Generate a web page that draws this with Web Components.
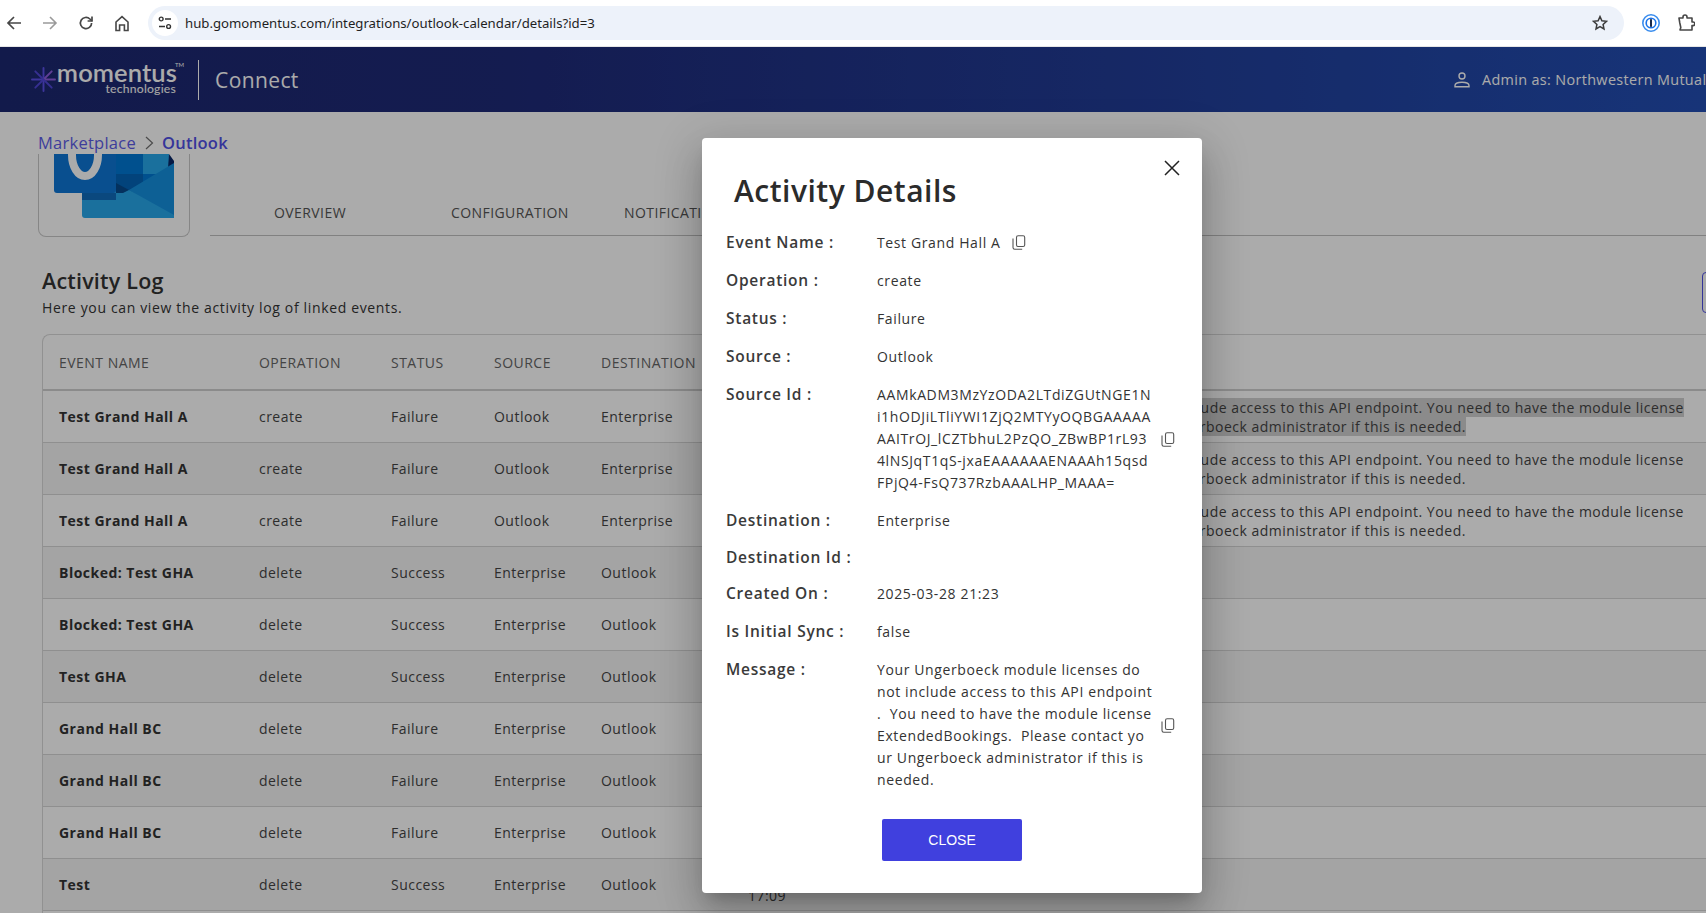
<!DOCTYPE html>
<html lang="en"><head><meta charset="utf-8"><title>Outlook</title>
<style>
html,body{margin:0;padding:0;height:100%;overflow:hidden;background:#fff;font-family:"Open Sans",sans-serif}
body{display:flex;flex-direction:column;width:1706px;height:913px}
</style></head><body>
<browser-bar></browser-bar>
<main-stage>
  <app-header></app-header>
  <bread-crumb></bread-crumb>
  <tab-strip></tab-strip>
  <log-heading></log-heading>
  <log-table>
    <log-row name="Test Grand Hall A" op="create" status="Failure" src="Outlook" dst="Enterprise" msg="sel"></log-row>
    <log-row name="Test Grand Hall A" op="create" status="Failure" src="Outlook" dst="Enterprise" msg="yes" alt></log-row>
    <log-row name="Test Grand Hall A" op="create" status="Failure" src="Outlook" dst="Enterprise" msg="yes"></log-row>
    <log-row name="Blocked: Test GHA" op="delete" status="Success" src="Enterprise" dst="Outlook" alt></log-row>
    <log-row name="Blocked: Test GHA" op="delete" status="Success" src="Enterprise" dst="Outlook"></log-row>
    <log-row name="Test GHA" op="delete" status="Success" src="Enterprise" dst="Outlook" alt></log-row>
    <log-row name="Grand Hall BC" op="delete" status="Failure" src="Enterprise" dst="Outlook"></log-row>
    <log-row name="Grand Hall BC" op="delete" status="Failure" src="Enterprise" dst="Outlook" alt></log-row>
    <log-row name="Grand Hall BC" op="delete" status="Failure" src="Enterprise" dst="Outlook"></log-row>
    <log-row name="Test" op="delete" status="Success" src="Enterprise" dst="Outlook" time="17:09" alt></log-row>
  </log-table>
  <modal-backdrop>
    <activity-modal>
      <detail-row label="Event Name :" copy="inline">Test Grand Hall A</detail-row>
      <detail-row label="Operation :">create</detail-row>
      <detail-row label="Status :">Failure</detail-row>
      <detail-row label="Source :">Outlook</detail-row>
      <detail-row label="Source Id :" copy="side">AAMkADM3MzYzODA2LTdiZGUtNGE1Ni1hODJiLTliYWI1ZjQ2MTYyOQBGAAAAAAAITrOJ_lCZTbhuL2PzQO_ZBwBP1rL934lNSJqT1qS-jxaEAAAAAAENAAAh15qsdFPjQ4-FsQ737RzbAAALHP_MAAA=</detail-row>
      <detail-row label="Destination :" gap="15">Enterprise</detail-row>
      <detail-row label="Destination Id :" gap="15"></detail-row>
      <detail-row label="Created On :">2025-03-28 21:23</detail-row>
      <detail-row label="Is Initial Sync :">false</detail-row>
      <detail-row label="Message :" copy="side" lines>Your Ungerboeck module licenses do<br>not include access to this API endpoint<br>.  You need to have the module license<br>ExtendedBookings.  Please contact yo<br>ur Ungerboeck administrator if this is<br>needed.</detail-row>
    </activity-modal>
  </modal-backdrop>
</main-stage>
<script>
function el(name, css, html, init){
  customElements.define(name, class extends HTMLElement{
    constructor(){super();const s=this.attachShadow({mode:'open'});s.innerHTML='<style>'+css+'</style>'+(typeof html==='function'?'':html);}
    connectedCallback(){ if(typeof html==='function'){const st=this.shadowRoot.querySelector('style');st.insertAdjacentHTML('afterend',html(this));} if(init)init(this);}
  });
}
const ico='fill="none" stroke="#474747" stroke-width="1.7"';
el('browser-bar',`
:host{display:flex;align-items:center;height:46px;flex:none;background:#fff;border-bottom:1px solid #e6e6e6}
.nav{width:36px;height:46px;display:flex;align-items:center;justify-content:center;flex:none}
.addr{margin-left:8px;width:1476px;height:34px;border-radius:17px;background:#edf2fa;display:flex;align-items:center;flex:none}
.tune{width:26px;height:26px;border-radius:50%;background:#fff;margin-left:4px;display:flex;align-items:center;justify-content:center;flex:none}
.url{margin-left:7px;font:13.2px/20px "Noto Sans",sans-serif;color:#1f1f1f;flex:1}
.star{margin-right:16px;display:flex}
.ext{display:flex;align-items:center;justify-content:center;flex:none}
`,`
<div class="nav" style="margin-left:-4px"><svg width="16" height="16" viewBox="0 0 16 16" ${ico}><path d="M15 8H2M8 2 2 8l6 6"/></svg></div>
<div class="nav"><svg width="16" height="16" viewBox="0 0 16 16" fill="none" stroke="#9a9a9a" stroke-width="1.6"><path d="M1 8h13M8 2l6 6-6 6"/></svg></div>
<div class="nav"><svg width="16" height="16" viewBox="0 0 16 16" ${ico}><path d="M13.6 8a5.6 5.6 0 1 1-1.7-4L14 6"/><path d="M14 1.6V6H9.6"/></svg></div>
<div class="nav"><svg width="16" height="17" viewBox="0 0 16 17" fill="none" stroke="#474747" stroke-width="1.6"><path d="M2 7 8 1.6 14 7v8.5h-3.6V10H5.6v5.5H2z"/></svg></div>
<div class="addr">
  <div class="tune"><svg width="14" height="14" viewBox="0 0 14 14" fill="none" stroke="#333" stroke-width="1.4"><circle cx="3.2" cy="3" r="1.9"/><path d="M7 3h6M1 10.5h6"/><circle cx="10.6" cy="10.5" r="1.9"/></svg></div>
  <div class="url">hub.gomomentus.com/integrations/outlook-calendar/details?id=3</div>
  <div class="star"><svg width="16" height="16" viewBox="0 0 16 16" fill="none" stroke="#3c3c3c" stroke-width="1.5"><path d="M8 1.6l1.9 4.2 4.6.5-3.4 3.1.9 4.6L8 11.7 4 14l.9-4.6-3.4-3.1 4.6-.5z"/></svg></div>
</div>
<div class="ext" style="margin-left:18px"><svg width="18" height="18" viewBox="0 0 18 18"><circle cx="9" cy="9" r="8.2" fill="#fff" stroke="#3a8dee" stroke-width="1.6"/><circle cx="9" cy="9" r="5.6" fill="#1a73e8"/><circle cx="9" cy="9" r="4" fill="#fff"/><rect x="8" y="5" width="2" height="8" rx=".8" fill="#1b2a4a"/></svg></div>
<div class="ext" style="margin-left:17px"><svg width="18" height="18" viewBox="0 0 18 18" fill="none" stroke="#474747" stroke-width="1.6"><path d="M2 4h4V3a2 2 0 0 1 4 0v1h5v4h1a1.8 1.8 0 0 1 0 3.6h-1V16H3l.8-2.5L2.8 9z" stroke-linejoin="round"/></svg></div>
`);
el('main-stage',`:host{display:block;position:relative;flex:1;min-height:0;overflow:hidden;background:#fff;color:#333}`,`<slot></slot>`);
el('app-header',`
:host{display:flex;align-items:center;height:65px;background:linear-gradient(90deg,#1c2870 0%,#1f2a78 30%,#234eb4 100%);color:#fff}
.star{margin-left:31px;flex:none;display:flex}
.logo{margin-left:3px;width:118px;flex:none;display:flex;flex-direction:column;align-items:flex-end;position:relative;top:-3px}
.m{font:600 25.5px/24px Lato,sans-serif;letter-spacing:.1px;color:#fff;white-space:nowrap}
.t{font:500 12.2px/11px Lato,sans-serif;color:#f4f4f4;letter-spacing:.2px;margin:-1px 1px 0 0}
.tm{position:absolute;right:-7px;top:1px;font:400 6px/7px Lato,sans-serif;color:#fff}
.div{width:1px;height:40px;background:#fff;margin-left:21px;flex:none}
.c{font:400 21px/30px "Open Sans",sans-serif;letter-spacing:.4px;margin-left:16px;color:#fff}
.r{margin-left:auto;display:flex;align-items:center;width:253px;overflow:hidden;white-space:nowrap;flex:none;font:400 14.4px/20px "Open Sans",sans-serif;letter-spacing:.35px;color:#fff}
.r svg{margin-right:11px;flex:none}
`,`
<div class="star"><svg width="25" height="25" viewBox="-12.5 -12.5 25 25"><g stroke-linecap="round" stroke-width="1.9"><path stroke="#5b4fe8" d="M0 0V-11.5M0 0V11.5M0 0H-11.5"/><path stroke="#8f5de0" d="M0 0H11.5M0 0 8.2-8.2"/><path stroke="#5046d8" d="M0 0-8.2-8.2M0 0-8.2 8.2M0 0 8.2 8.2"/></g></svg></div>
<div class="logo"><span class="m">momentus</span><span class="t">technologies</span><span class="tm">TM</span></div>
<div class="div"></div><div class="c">Connect</div>
<div class="r"><svg width="18" height="18" viewBox="0 0 18 18" fill="none" stroke="#fff" stroke-width="1.4"><circle cx="9" cy="5" r="3"/><path d="M2 15.7v-1.2c0-2 3.4-3.2 7-3.2s7 1.2 7 3.2v1.2z"/></svg><span>Admin as: Northwestern Mutual</span></div>
`);
el('bread-crumb',`
:host{display:flex;align-items:center;height:42px;padding:20px 0 0 38px;font:400 16.5px/22px "Open Sans",sans-serif;letter-spacing:.25px;color:#5c5ce8;box-sizing:border-box}
b{font-weight:600;margin-left:8px;color:#4f4fe6}
svg{margin-left:9px}
`,`<span>Marketplace</span><svg width="9" height="14" viewBox="0 0 9 14" fill="none" stroke="#707070" stroke-width="1.2"><path d="M1 1l6.5 6L1 13"/></svg><b>Outlook</b>`);
el('tab-strip',`
:host{display:flex;height:83px;padding-left:38px}
.card{width:152px;height:83px;box-sizing:border-box;border:1px solid #c8c8c8;border-top:0;border-radius:0 0 8px 8px;overflow:hidden;flex:none}
svg{display:block}
.tabs{margin-left:20px;flex:1;height:82px;border-bottom:1px solid #c0c0c0;box-sizing:border-box;font:400 14px/20px "Open Sans",sans-serif;color:#555;letter-spacing:.42px;display:flex;align-items:flex-start;padding:49px 0 0 64px}
.tabs span:nth-child(1){width:177px}.tabs span:nth-child(2){width:173px}
`,`
<div class="card"><svg width="150" height="82" viewBox="39 154 150 82">
<rect x="116" y="150" width="27" height="24" fill="#0078d4"/><rect x="143" y="150" width="26" height="24" fill="#28a8ea"/><rect x="116" y="174" width="27" height="22" fill="#0364b8"/><rect x="143" y="174" width="26" height="14" fill="#0078d4"/>
<path d="M169 154l5 7v4l-6 4z" fill="#0a2767"/>
<path d="M129 190 174 163v52l-2 3z" fill="#1490df"/><path d="M82 190l47 0 45 25v3H85a3 3 0 0 1-3-3z" fill="#28a8ea"/><path d="M116 183l13 7-6 3h-7z" fill="#064a8c"/>
<path d="M82 193h34v7H82z" fill="#0f6cbd"/>
<path d="M54 150h62v40a3 3 0 0 1-3 3H57a3 3 0 0 1-3-3z" fill="#0e76d6"/>
<ellipse cx="85" cy="155" rx="13" ry="21" fill="none" stroke="#fff" stroke-width="8"/>
</svg></div>
<div class="tabs"><span>OVERVIEW</span><span>CONFIGURATION</span><span>NOTIFICATIONS</span></div>
`);
el('log-heading',`
:host{display:flex;width:1700px;height:97px;padding:29px 0 0 42px;box-sizing:border-box;color:#2a2a2a}
.t{flex:1}
h2{margin:0;font:600 21.5px/30px "Open Sans",sans-serif;letter-spacing:.2px;color:#333}
p{margin:2px 0 0;font:400 14px/20px "Open Sans",sans-serif;letter-spacing:.65px;color:#333}
.btn{margin-top:6px;width:60px;height:41px;box-sizing:border-box;border:1px solid #4f4fe6;border-radius:4px;flex:none;margin-right:-62px}
`,`<div class="t"><h2>Activity Log</h2><p>Here you can view the activity log of linked events.</p></div><div class="btn"></div>`);
el('log-table',`
:host{display:block;margin-left:42px;width:1700px;box-sizing:border-box;border:1px solid #d8d8d8;border-radius:8px 0 0 0;border-width:1px 0 0 1px;height:700px}
.h{display:grid;grid-template-columns:200px 132px 103px 107px 147px 1fr;height:56px;box-sizing:border-box;align-items:center;padding:2px 0 0 16px;border-bottom:2px solid #cfcfcf;font:400 14px/20px "Open Sans",sans-serif;letter-spacing:.48px;color:#666}
`,`<div class="h"><span>EVENT NAME</span><span>OPERATION</span><span>STATUS</span><span>SOURCE</span><span>DESTINATION</span><span>CREATED ON</span></div><slot></slot>`);
el('log-row',`
:host{display:grid;grid-template-columns:200px 132px 103px 107px 147px 138px 1fr;height:52px;box-sizing:border-box;align-items:center;padding-left:16px;border-bottom:1px solid #d6d6d6;font:400 14px/19px "Open Sans",sans-serif;letter-spacing:.47px;color:#444;background:#fff;white-space:nowrap}
:host([alt]){background:#f5f5f5}
b{font-weight:700;color:#333;letter-spacing:.48px}
.c{padding-top:3px}
.m{letter-spacing:.48px;padding-top:1px}
.sel{background:#cfcfcf}
`,(h)=>{
  const a=n=>h.getAttribute(n)||'';
  const l1='Your Ungerboeck module licenses do not include access to this API endpoint. You need to have the module license';
  const l2='ExtendedBookings. Please contact your Ungerboeck administrator if this is needed.';
  let m='';
  if(a('msg')==='sel') m='<div class="m"><span class="sel">'+l1+'</span><br><span class="sel">'+l2+'</span></div>';
  else if(a('msg')) m='<div class="m">'+l1+'<br>'+l2+'</div>';
  return '<b>'+a('name')+'</b><span>'+a('op')+'</span><span>'+a('status')+'</span><span>'+a('src')+'</span><span>'+a('dst')+'</span><div class="c">2025-03-28<br>'+(a('time')||'21:23')+'</div>'+m;
});
el('modal-backdrop',`
:host{position:absolute;inset:0;background:rgba(0,0,0,.33);display:block}
`,`<slot></slot>`);
el('activity-modal',`
:host{position:absolute;left:702px;top:91px;width:500px;height:755px;box-sizing:border-box;background:#fff;border-radius:4px;box-shadow:0 11px 15px -7px rgba(0,0,0,.2),0 24px 38px 3px rgba(0,0,0,.14),0 9px 46px 8px rgba(0,0,0,.12);padding:27px 24px 0;display:flex;flex-direction:column}
h1{margin:0 0 15px 8px;font:600 30px/52px "Open Sans",sans-serif;letter-spacing:.5px;color:#2b2b2b}
.x{position:absolute;right:22px;top:22px;display:flex}
.foot{display:flex;justify-content:center;margin-top:12px}
button{width:140px;height:42px;border:0;border-radius:2px;background:#4040de;color:#fff;font:400 14px/20px "Liberation Sans",Arial,sans-serif}
`,`<div class="x"><svg width="16" height="16" viewBox="0 0 16 16" fill="none" stroke="#222" stroke-width="1.5"><path d="M1 1l14 14M15 1 1 15"/></svg></div>
<h1>Activity Details</h1><slot></slot><div class="foot"><button>CLOSE</button></div>`);
const copy='<svg width="14" height="15" viewBox="0 0 14 15" fill="none" stroke="#555" stroke-width="1.1"><rect x="4.5" y=".8" width="8.2" height="10.7" rx="1.6"/><path d="M1 3.5v9c0 1 .6 1.7 1.7 1.7h7.5"/></svg>';
el('detail-row',`
:host{display:flex;align-items:flex-start;margin-bottom:16px;color:#333}
.l{width:151px;flex:none;font:600 15.5px/22px "Open Sans",sans-serif;letter-spacing:.74px;color:#3a3a3a;margin-top:-1px}
.v{font:400 14px/22px "Open Sans",sans-serif;letter-spacing:.62px;color:#333;word-break:break-all;white-space:pre-wrap;min-height:21px}
.v.w{width:277px;flex:none}
:host([lines]) .v{white-space:pre;word-break:normal}
.ci{margin-left:11px;display:flex;margin-top:3px}
.cs{margin-left:7px;display:flex;align-self:center}
`,(h)=>{
  const c=h.getAttribute('copy');
  if(h.getAttribute('gap')) h.style.marginBottom=h.getAttribute('gap')+'px';
  return '<div class="l">'+h.getAttribute('label')+'</div><div class="v'+(c==='side'?' w':'')+'"><slot></slot></div>'+
    (c==='inline'?'<div class="ci">'+copy+'</div>':c==='side'?'<div class="cs">'+copy+'</div>':'');
});
</script>
</body></html>
